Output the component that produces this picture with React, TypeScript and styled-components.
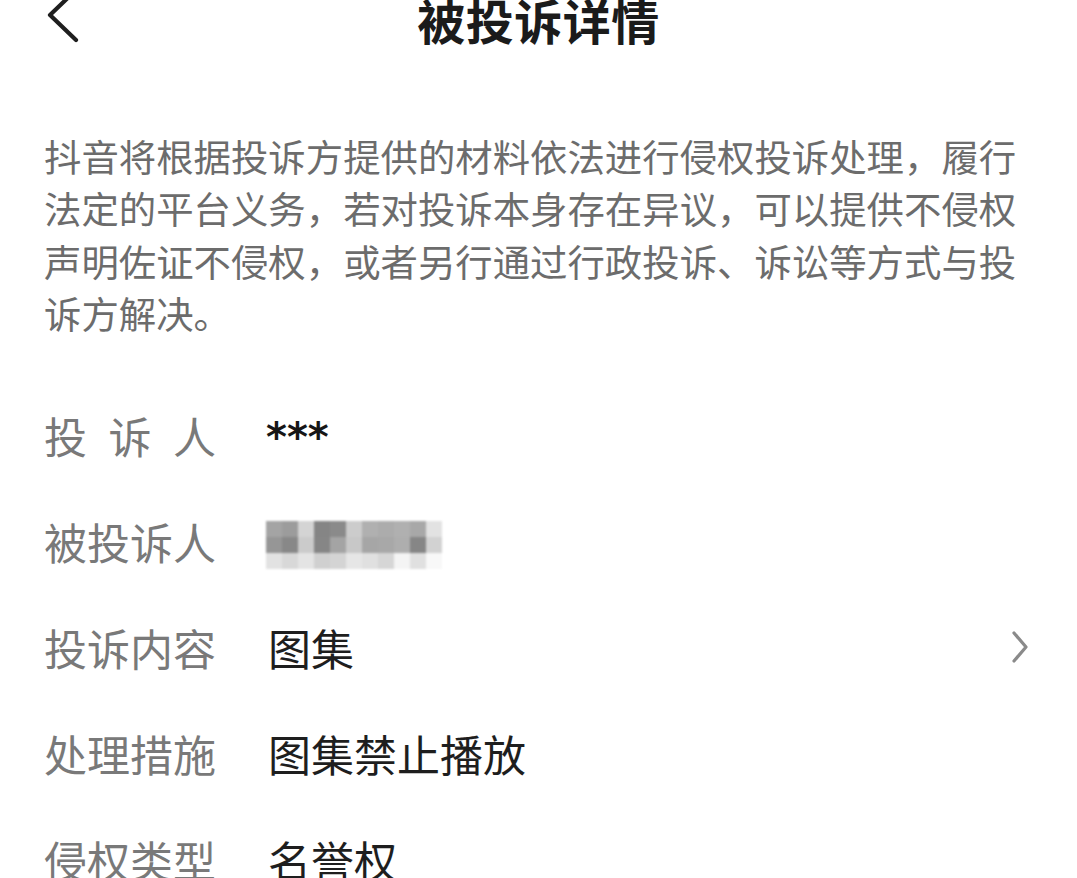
import React from "react";
import styled, { createGlobalStyle } from "styled-components";

const GlobalStyle = createGlobalStyle`
  html, body {
    margin: 0;
    padding: 0;
    background: #ffffff;
    overflow: hidden;
  }
  body {
    font-family: "Noto Sans CJK SC", "Noto Sans", sans-serif;
  }
`;

const Page = styled.div`
  width: 1077px;
  height: 878px;
  box-sizing: border-box;
  padding: 0 44px;
  background: #ffffff;
  overflow: hidden;
`;

const Header = styled.header`
  display: grid;
  grid-template-columns: 1fr auto 1fr;
  align-items: center;
  height: 60px;
  margin-top: -11px;
`;

const BackButton = styled.div`
  display: flex;
  align-items: center;
  padding-left: 2px;
`;

const Title = styled.h1`
  margin: 0;
  font-size: 48px;
  font-weight: 700;
  color: #1b1b1b;
  line-height: 60px;
  letter-spacing: 0.5px;
`;

const Notice = styled.p`
  margin: 81px 0 0;
  font-size: 37.4px;
  line-height: 52.3px;
  color: #6c6c6c;
`;

const InfoList = styled.div`
  display: flex;
  flex-direction: column;
  margin-top: 43px;
`;

const Row = styled.div`
  display: flex;
  align-items: center;
  height: 106px;
  flex-shrink: 0;
`;

const Label = styled.span`
  width: 172px;
  flex-shrink: 0;
  font-size: 43px;
  color: #797979;
  text-align: justify;
  text-align-last: justify;
  white-space: nowrap;
`;

const Value = styled.span<{ $masked?: boolean }>`
  flex: 1;
  margin-left: 52px;
  font-size: 43px;
  color: #1e1e1e;
  display: flex;
  align-items: center;
  ${(p) =>
    p.$masked
      ? "font-family: 'DejaVu Sans', sans-serif; font-size: 40px; font-weight: 700; letter-spacing: 0; margin-left: 50px; margin-top: 4px; color: #161616;"
      : ""}
`;

const Pixelated = styled.svg`
  margin-left: -2px;
  margin-top: 10px;
  filter: blur(1.2px);
`;

const Chevron = styled.svg`
  flex-shrink: 0;
  margin-right: 3px;
`;

const blurRows = [
  ["#a4a4a4", "#9c9c9c", "#d4d4d4", "#858585", "#8a8a8a", "#cccccc", "#b0b0b0", "#acacac", "#b0b0b0", "#a8a8a8", "#e2e2e2"],
  ["#969696", "#888888", "#cbcbcb", "#868686", "#a4a4a4", "#c8c8c8", "#a6a6a6", "#a8a8a8", "#aeaeae", "#868686", "#d2d2d2"],
  ["#e2e2e2", "#d8d8d8", "#e4e4e4", "#d0d0d0", "#d4d4d4", "#e6e6e6", "#e0e0e0", "#d6d6d6", "#f4f4f4", "#e0e0e0", "#f8f8f8"],
];

const BlurredName = () => (
  <Pixelated width="176" height="50" viewBox="0 0 176 50">
    {blurRows.map((row, r) =>
      row.map((c, i) => (
        <rect key={`${r}-${i}`} x={i * 16} y={r * 16} width="16" height="16" fill={c} />
      ))
    )}
  </Pixelated>
);

const items: { label: string; value: React.ReactNode; masked?: boolean; arrow?: boolean }[] = [
  { label: "投诉人", value: "***", masked: true },
  { label: "被投诉人", value: <BlurredName /> },
  { label: "投诉内容", value: "图集", arrow: true },
  { label: "处理措施", value: "图集禁止播放" },
  { label: "侵权类型", value: "名誉权" },
];

export default function App() {
  return (
    <>
      <GlobalStyle />
      <Page>
        <Header>
          <BackButton>
            <svg width="34" height="58" viewBox="0 0 34 58">
              <polyline
                points="30,0 4,25 30,50"
                fill="none"
                stroke="#1f1f1f"
                strokeWidth="4.2"
                strokeLinecap="round"
                strokeLinejoin="round"
              />
            </svg>
          </BackButton>
          <Title>被投诉详情</Title>
          <div />
        </Header>
        <Notice>
          抖音将根据投诉方提供的材料依法进行侵权投诉处理，履行法定的平台义务，若对投诉本身存在异议，可以提供不侵权声明佐证不侵权，或者另行通过行政投诉、诉讼等方式与投诉方解决。
        </Notice>
        <InfoList>
          {items.map((it) => (
            <Row key={it.label}>
              <Label>{it.label}</Label>
              <Value $masked={it.masked}>{it.value}</Value>
              {it.arrow && (
                <Chevron width="20" height="34" viewBox="0 0 20 34">
                  <polyline
                    points="4,3 16,17 4,31"
                    fill="none"
                    stroke="#8a8a8a"
                    strokeWidth="3.2"
                    strokeLinecap="round"
                    strokeLinejoin="round"
                  />
                </Chevron>
              )}
            </Row>
          ))}
        </InfoList>
      </Page>
    </>
  );
}
